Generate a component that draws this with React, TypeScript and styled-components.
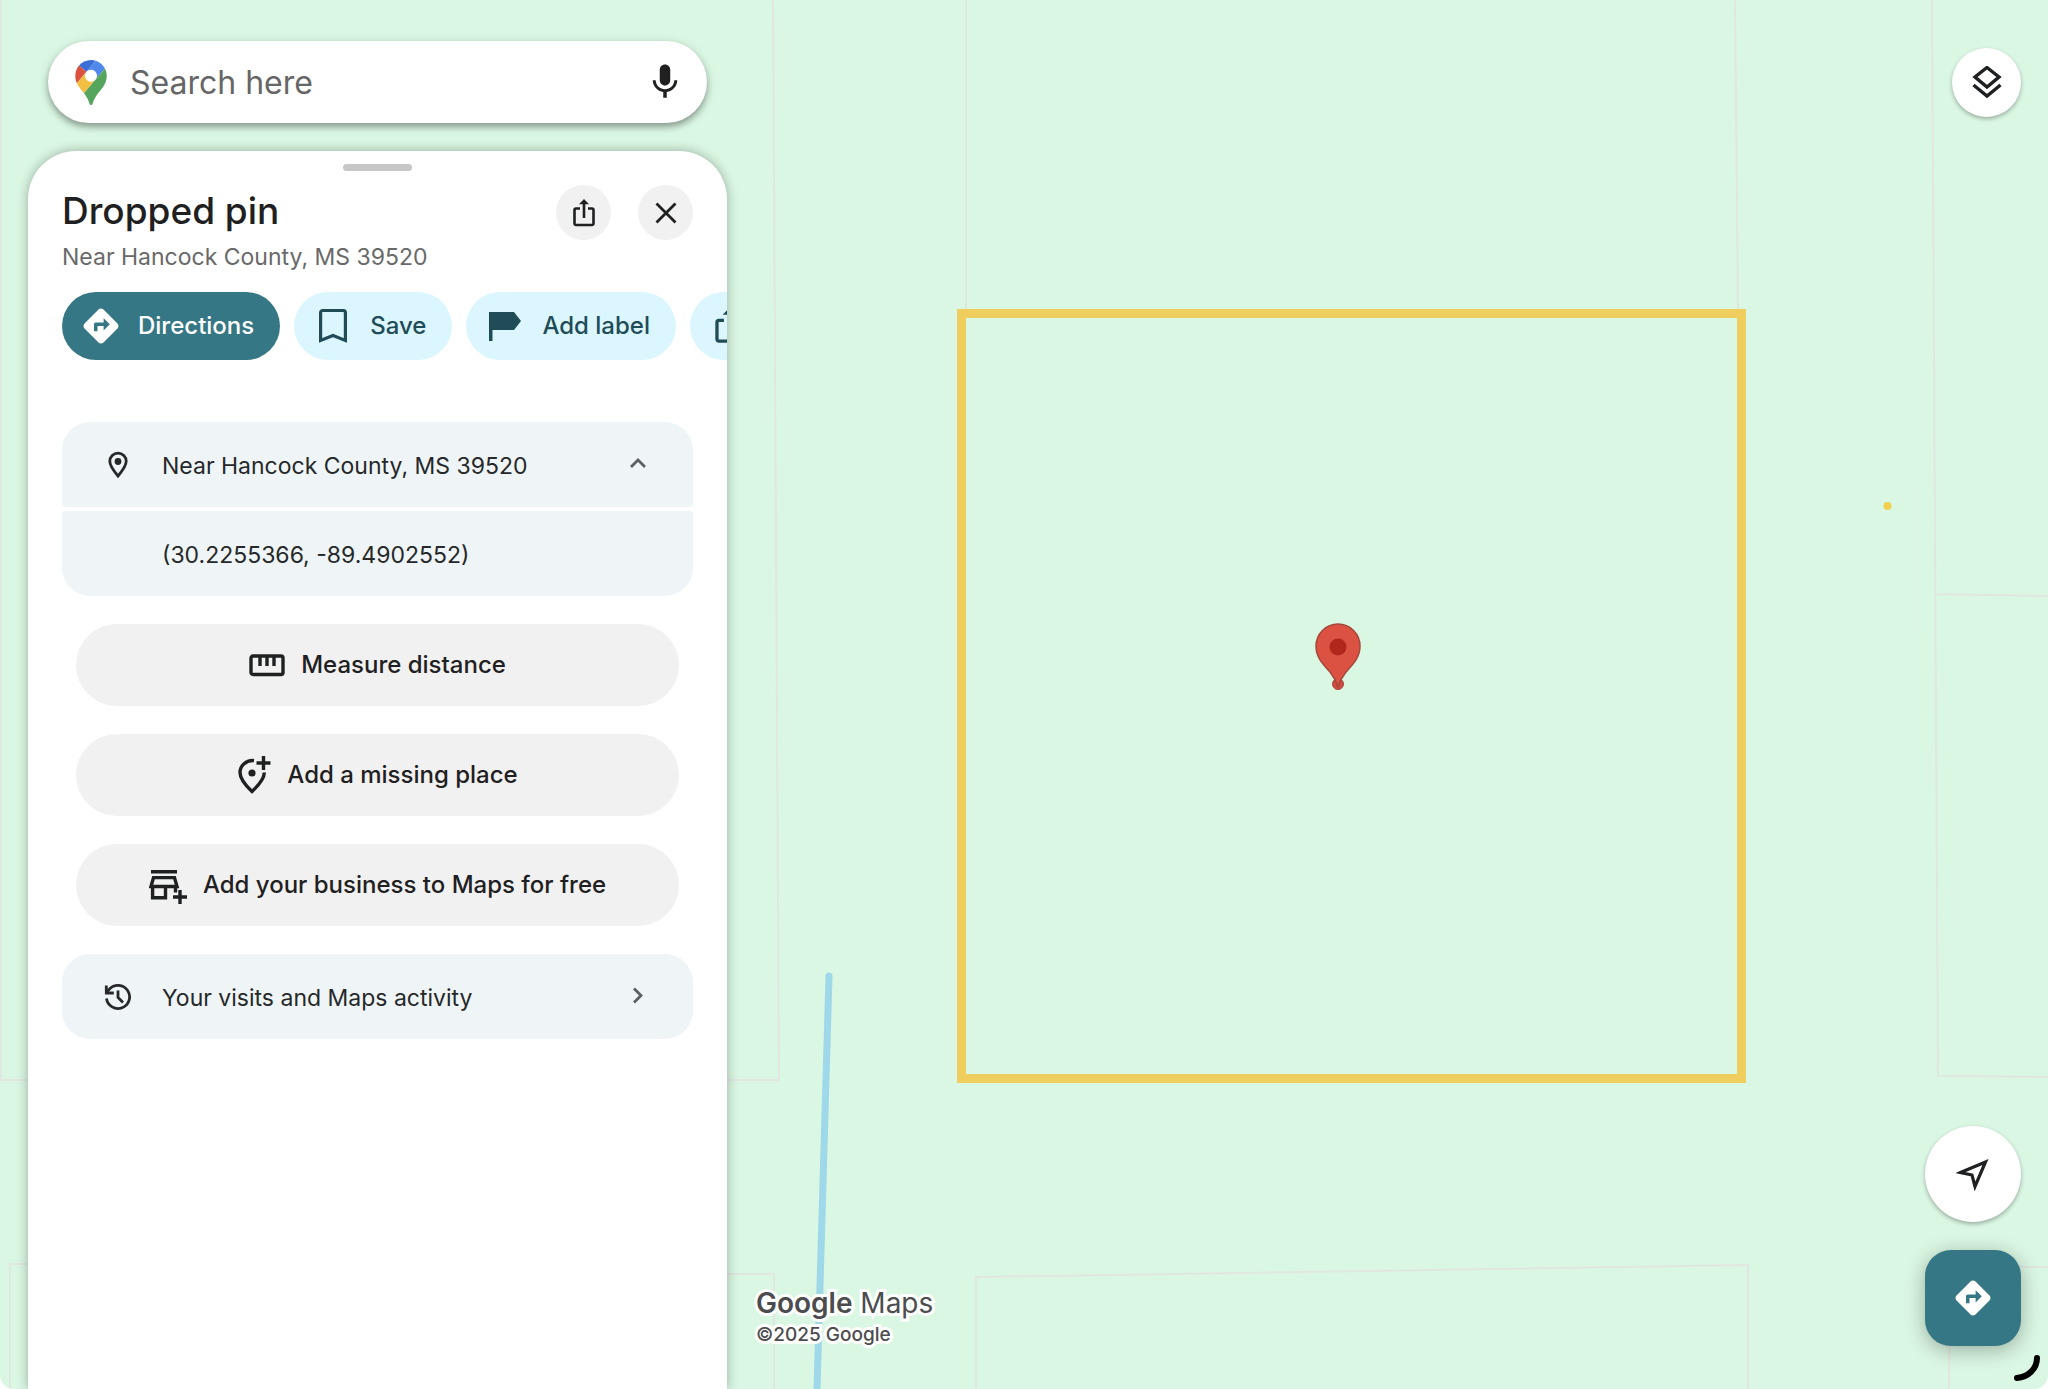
import React from "react";
import styled, { createGlobalStyle, css } from "styled-components";
import { MdMic, MdDirections } from "react-icons/md";

const GlobalStyle = createGlobalStyle`
  * { box-sizing: border-box; }
  html, body { margin: 0; height: 100%; }
  body {
    overflow: hidden;
    font-family: Inter, "Liberation Sans", sans-serif;
    color: #1f2021;
    background: #ffffff;
  }
  #root { height: 100%; }
  button { font: inherit; border: 0; padding: 0; margin: 0; cursor: pointer; }
  svg { display: block; flex: none; }
`;

const Screen = styled.main`
  position: relative;
  height: 100vh;
  overflow: hidden;
  display: flex;
  justify-content: space-between;
  background: #daf7e3;
  border-radius: 0 0 14px 14px;
`;

const MapCanvas = styled.svg`
  position: absolute;
  inset: 0;
  width: 100%;
  height: 100%;
`;

const Sidebar = styled.aside`
  position: relative;
  width: 727px;
  padding: 41px 0 0 28px;
  display: flex;
  flex-direction: column;
  gap: 28px;
`;

const SearchBar = styled.form`
  display: flex;
  align-items: center;
  height: 82px;
  margin: 0 20px;
  padding: 0 21px 0 27px;
  border-radius: 41px;
  background: #ffffff;
  box-shadow: 0 4px 6px rgba(0, 0, 0, 0.3), 0 2px 12px rgba(0, 0, 0, 0.12);
`;

const SearchInput = styled.input`
  flex: 1;
  min-width: 0;
  margin-left: 23px;
  padding: 2px 0 0;
  border: 0;
  outline: 0;
  background: transparent;
  font: 400 32px/40px Inter, "Liberation Sans", sans-serif;
  color: #1f2021;
  &::placeholder { color: #666666; opacity: 1; }
`;

const PlainButton = styled.button`
  display: flex;
  background: transparent;
  color: #1f2021;
`;

const Panel = styled.section`
  flex: 1;
  padding: 13px 0 0;
  border-radius: 48px 48px 0 0;
  background: #ffffff;
  box-shadow: 0 0 12px rgba(0, 0, 0, 0.3);
  overflow: hidden;
`;

const Handle = styled.div`
  width: 69px;
  height: 7px;
  margin: 0 auto 14px;
  border-radius: 4px;
  background: #c7c7c7;
`;

const Header = styled.header`
  display: flex;
  align-items: flex-start;
  justify-content: space-between;
  padding: 0 34px;
`;

const Title = styled.h1`
  margin: 2px 0 6px;
  font-size: 37px;
  line-height: 48px;
  font-weight: 500;
`;

const Subtitle = styled.p`
  margin: 0;
  font-size: 23px;
  line-height: 32px;
  color: #696969;
`;

const HeaderActions = styled.div`
  display: flex;
  gap: 27px;
`;

const RoundButton = styled.button`
  display: flex;
  align-items: center;
  justify-content: center;
  width: 55px;
  height: 55px;
  border-radius: 50%;
  background: #f1f1f1;
  color: #1f2021;
`;

const Chips = styled.div`
  display: flex;
  gap: 14px;
  margin-top: 19px;
  padding-left: 34px;
  overflow: hidden;
`;

const Chip = styled.button<{ $primary?: boolean }>`
  display: flex;
  flex: none;
  align-items: center;
  gap: 16px;
  height: 68px;
  padding: 0 26px 0 18px;
  border-radius: 34px;
  font-size: 24px;
  line-height: 32px;
  font-weight: 500;
  white-space: nowrap;
  background: ${(p) => (p.$primary ? "#367786" : "#dbf6ff")};
  color: ${(p) => (p.$primary ? "#ffffff" : "#1f4c57")};
`;

const ChipIcon = styled.span`
  display: flex;
  align-items: center;
  justify-content: center;
  width: 42px;
  height: 42px;
`;

const Details = styled.div`
  display: flex;
  flex-direction: column;
  gap: 28px;
  margin-top: 62px;
  padding: 0 34px;
`;

const CardGroup = styled.div`
  display: flex;
  flex-direction: column;
  gap: 4px;
`;

const cardShape = {
  single: css`border-radius: 28px;`,
  top: css`border-radius: 28px 28px 4px 4px;`,
  bottom: css`border-radius: 4px 4px 28px 28px;`,
};

const Card = styled.button<{ $shape: keyof typeof cardShape }>`
  display: grid;
  grid-template-columns: 58px 1fr 20px;
  align-items: center;
  height: 85px;
  padding: 0 45px 0 42px;
  background: #eff5f6;
  color: #26282a;
  font-size: 23px;
  line-height: 32px;
  text-align: left;
  ${(p) => cardShape[p.$shape]}
`;

const CardText = styled.span`
  grid-column: 2;
  padding-top: 2px;
`;

const ActionList = styled.div`
  display: flex;
  flex-direction: column;
  gap: 28px;
  padding: 0 14px;
`;

const Action = styled.button`
  display: flex;
  align-items: center;
  justify-content: center;
  gap: 16px;
  height: 82px;
  border-radius: 41px;
  background: #f1f1f1;
  color: #1f2021;
  font-size: 24px;
  line-height: 32px;
  font-weight: 500;
`;

const MapControls = styled.nav`
  position: relative;
  flex: 1;
  display: flex;
  flex-direction: column;
  justify-content: space-between;
  align-items: flex-end;
  padding: 48px 27px 43px;
`;

const BottomControls = styled.div`
  display: flex;
  flex-direction: column;
  gap: 28px;
`;

const MapButton = styled.button<{ $size: number; $primary?: boolean }>`
  display: flex;
  align-items: center;
  justify-content: center;
  width: ${(p) => p.$size}px;
  height: ${(p) => p.$size}px;
  border-radius: ${(p) => (p.$primary ? "26px" : "50%")};
  background: ${(p) => (p.$primary ? "#367786" : "#ffffff")};
  color: ${(p) => (p.$primary ? "#ffffff" : "#1f2021")};
  box-shadow: ${(p) =>
    p.$primary ? "0 4px 20px rgba(0, 0, 0, 0.3)" : "0 2px 4px rgba(0, 0, 0, 0.3)"};
`;

const Attribution = styled.footer`
  position: absolute;
  left: 29px;
  bottom: 42px;
  color: #4c4c4e;
  paint-order: stroke fill;
  -webkit-text-stroke: 6px #ffffff;
`;

const Brand = styled.div`
  margin-bottom: 2px;
  font: 400 28px/36px Inter, "Liberation Sans", sans-serif;
  b { font-weight: 600; }
`;

const Copyright = styled.div`
  font-size: 19px;
  line-height: 24px;
  font-weight: 500;
`;

const CornerMark = styled.svg`
  position: absolute;
  right: 4px;
  bottom: 4px;
`;

const MapsLogo = () => (
  <svg width="32" height="45" viewBox="0 0 92.3 132.3" aria-hidden="true">
    <path fill="#3a6fd8" d="M60.2 2.2C55.8.8 51 0 46.1 0 32 0 19.3 6.4 10.8 16.5l21.8 18.3z" />
    <path fill="#dc5040" d="M10.8 16.5C4.1 24.5 0 34.9 0 46.1c0 8.7 1.7 15.7 4.6 22l28-33.3z" />
    <path fill="#5188ee" d="M46.2 28.5c9.8 0 17.7 7.9 17.7 17.7 0 4.3-1.6 8.3-4.2 11.4 0 0 13.9-16.6 27.5-32.7-5.6-10.8-15.3-19-27-22.7L32.6 34.8c3.3-3.8 8.1-6.3 13.6-6.3" />
    <path fill="#f2bf42" d="M46.2 63.8c-9.8 0-17.7-7.9-17.7-17.7 0-4.3 1.5-8.3 4.1-11.3l-28 33.3c4.8 10.6 12.8 19.2 21 29.9l34.1-40.5c-3.3 3.9-8.1 6.3-13.5 6.3" />
    <path fill="#56a55c" d="M59.1 109.2c15.4-24.1 33.3-35 33.3-63 0-7.7-1.9-14.9-5.2-21.3L25.6 98c2.6 3.4 5.3 7.3 7.9 11.3 9.4 14.5 6.8 23.1 12.8 23.1s3.4-8.7 12.8-23.2" />
  </svg>
);

const ShareIcon = ({ size = 30 }: { size?: number }) => (
  <svg width={size} height={size} viewBox="0 1 30 30" fill="none" stroke="currentColor" strokeWidth="2.6" aria-hidden="true">
    <path d="M11 11.5H7A1.5 1.5 0 0 0 5.5 13v13.500A1.500 1.500 0 0 0 7 28h16a1.500 1.500 0 0 0 1.500-1.500V13a1.500 1.500 0 0 0-1.500-1.500H19M15 21V4" />
    <path d="M10 7.200 15 2l5 5.200z" fill="currentColor" stroke="none" />
  </svg>
);

const CloseIcon = () => (
  <svg width="24" height="24" viewBox="0 0 24 24" fill="none" stroke="currentColor" strokeWidth="2.8" aria-hidden="true">
    <path d="M2.500 2.500l19 19M21.500 2.500l-19 19" />
  </svg>
);

const BookmarkIcon = () => (
  <svg width="28" height="36" viewBox="0 0 28 36" fill="none" stroke="currentColor" strokeWidth="3.2" aria-hidden="true">
    <path d="M1.600 32.500V4.500a2 2 0 0 1 2-2h20.800a2 2 0 0 1 2 2v28L14 27.500z" />
  </svg>
);

const FlagIcon = () => (
  <svg width="34" height="34" viewBox="0 0 34 34" fill="currentColor" aria-hidden="true">
    <path d="M1 3h25l7 9-7 9H4.500v11H1z" />
  </svg>
);

const PlaceIcon = () => (
  <svg width="28" height="30" viewBox="0 0 28 30" fill="none" stroke="currentColor" strokeWidth="2.8" aria-hidden="true">
    <path d="M14 26C8.500 19.500 5.800 15.500 5.800 11.300a8.200 8.200 0 0 1 16.400 0C22.200 15.500 19.500 19.500 14 26z" />
    <circle cx="14" cy="11.500" r="3.400" fill="currentColor" stroke="none" />
  </svg>
);

const HistoryIcon = () => (
  <svg width="28" height="30" viewBox="0 0 28 30" fill="none" stroke="currentColor" strokeWidth="2.8" aria-hidden="true">
    <path d="M2.500 16.500A11.600 11.600 0 1 0 5.500 7L2.800 10" />
    <path d="M2.300 3.500v7.500h7.500M14 8.500v7l5 5" />
  </svg>
);

const Chevron = ({ up }: { up?: boolean }) => (
  <svg width="20" height="24" viewBox="0 0 20 24" fill="none" stroke="#5c5f61" strokeWidth="2.8" aria-hidden="true">
    <path d={up ? "M3 14l7-7 7 7" : "M6 3.500l7 7-7 7"} />
  </svg>
);

const RulerIcon = () => (
  <svg width="36" height="24" viewBox="0 0 36 24" fill="none" stroke="currentColor" strokeWidth="3.4" aria-hidden="true">
    <rect x="2" y="3" width="32" height="18.500" rx="2" />
    <path d="M11 3v10M18 3v10M25 3v10" />
  </svg>
);

const AddPlaceIcon = () => (
  <svg width="34" height="40" viewBox="1 0 34 40" fill="none" stroke="currentColor" strokeWidth="3.4" aria-hidden="true">
    <path d="M18 5.600C9.500 5 4 11 4 17.500 4 23 7.500 28.500 16 36.500 24 29 28.300 23.500 28.300 17.500" />
    <path d="M20.500 8h14M27.500 1v14" />
    <circle cx="16" cy="18" r="3.600" fill="currentColor" stroke="none" />
  </svg>
);

const AddBusinessIcon = () => (
  <svg width="38" height="38" viewBox="0 0 38 38" fill="none" stroke="currentColor" strokeWidth="3.4" aria-hidden="true">
    <path d="M2 5.800h26M2 20.500l2.500-8.900h21l2.500 8.900zM3.600 20v11.800H16.500V20M26.500 20v6.500M31 24v14M24 31h14" />
  </svg>
);

const LayersIcon = () => (
  <svg width="32" height="34" viewBox="0 1 32 34" fill="none" stroke="currentColor" strokeWidth="3.4" aria-hidden="true">
    <path d="M16 2.500 28 12 16 22 4 12zM2.500 20 16 31l13.500-11" />
  </svg>
);

const NavigateIcon = () => (
  <svg width="34" height="34" viewBox="0 0 34 34" fill="none" stroke="currentColor" strokeWidth="3.2" aria-hidden="true">
    <path d="M4.500 15.500 29.500 5 19 29.500 16 18z" />
  </svg>
);

const MapDrawing = () => (
  <MapCanvas viewBox="0 0 2048 1389" preserveAspectRatio="xMidYMid slice" fill="none" aria-hidden="true">
    <g stroke="#e0e7e1" strokeWidth="2">
      <path d="M773 0 779 1080H0M1 0v1080M966 0v310M1735 0l3 310M1932 0l6 1076 110 1M1935 594l113 2" />
      <path d="M10 1389V1264h20M727 1274h47v115M976 1389V1277l772-12v124M1949 1389l1-122h98" />
    </g>
    <path d="M829 976 817 1389" stroke="#9fd8e9" strokeWidth="7" strokeLinecap="round" />
    <rect x="961.500" y="313.500" width="780" height="765" stroke="#efce5e" strokeWidth="9" />
    <circle cx="1887.500" cy="506" r="4" fill="#f0d04c" />
    <circle cx="1338" cy="684" r="5.500" fill="#d24a3d" stroke="#a5483c" />
    <path d="M1338 687c-2-6-4-10-8-15-8-9-14-15-14-26a22 22 0 0 1 44 0c0 11-6 17-14 26-4 5-6 9-8 15z" fill="#db5142" stroke="#a5483c" strokeWidth="1.5" />
    <circle cx="1338" cy="647" r="8.500" fill="#b1271b" />
  </MapCanvas>
);

export default function App() {
  return (
    <>
      <GlobalStyle />
      <Screen>
        <MapDrawing />
        <Sidebar>
          <SearchBar role="search" onSubmit={(e) => e.preventDefault()}>
            <MapsLogo />
            <SearchInput type="text" aria-label="Search here" placeholder="Search here" />
            <PlainButton type="button" aria-label="Voice search">
              <MdMic size={42} />
            </PlainButton>
          </SearchBar>
          <Panel>
            <Handle />
            <Header>
              <div>
                <Title>Dropped pin</Title>
                <Subtitle>Near Hancock County, MS 39520</Subtitle>
              </div>
              <HeaderActions>
                <RoundButton type="button" aria-label="Share"><ShareIcon /></RoundButton>
                <RoundButton type="button" aria-label="Close"><CloseIcon /></RoundButton>
              </HeaderActions>
            </Header>
            <Chips>
              <Chip type="button" $primary><ChipIcon><MdDirections size={42} /></ChipIcon>Directions</Chip>
              <Chip type="button"><ChipIcon><BookmarkIcon /></ChipIcon>Save</Chip>
              <Chip type="button"><ChipIcon><FlagIcon /></ChipIcon>Add label</Chip>
              <Chip type="button" aria-label="Share"><ChipIcon><ShareIcon size={38} /></ChipIcon></Chip>
            </Chips>
            <Details>
              <CardGroup>
                <Card type="button" $shape="top" aria-expanded="true">
                  <PlaceIcon />
                  <CardText>Near Hancock County, MS 39520</CardText>
                  <Chevron up />
                </Card>
                <Card type="button" $shape="bottom">
                  <CardText>(30.2255366, -89.4902552)</CardText>
                </Card>
              </CardGroup>
              <ActionList>
                <Action type="button"><RulerIcon />Measure distance</Action>
                <Action type="button"><AddPlaceIcon />Add a missing place</Action>
                <Action type="button"><AddBusinessIcon />Add your business to Maps for free</Action>
              </ActionList>
              <Card type="button" $shape="single">
                <HistoryIcon />
                <CardText>Your visits and Maps activity</CardText>
                <Chevron />
              </Card>
            </Details>
          </Panel>
        </Sidebar>
        <MapControls aria-label="Map controls">
          <MapButton type="button" $size={69} aria-label="Layers"><LayersIcon /></MapButton>
          <BottomControls>
            <MapButton type="button" $size={96} aria-label="My location"><NavigateIcon /></MapButton>
            <MapButton type="button" $size={96} $primary aria-label="Directions"><MdDirections size={42} /></MapButton>
          </BottomControls>
          <Attribution>
            <Brand><b>Google</b> Maps</Brand>
            <Copyright>©2025 Google</Copyright>
          </Attribution>
        </MapControls>
        <CornerMark width="32" height="32" viewBox="0 0 32 32" fill="none" aria-hidden="true">
          <path d="M25 5C25 16 16 24 5 25" stroke="#000000" strokeWidth="6" strokeLinecap="round" />
        </CornerMark>
      </Screen>
    </>
  );
}
